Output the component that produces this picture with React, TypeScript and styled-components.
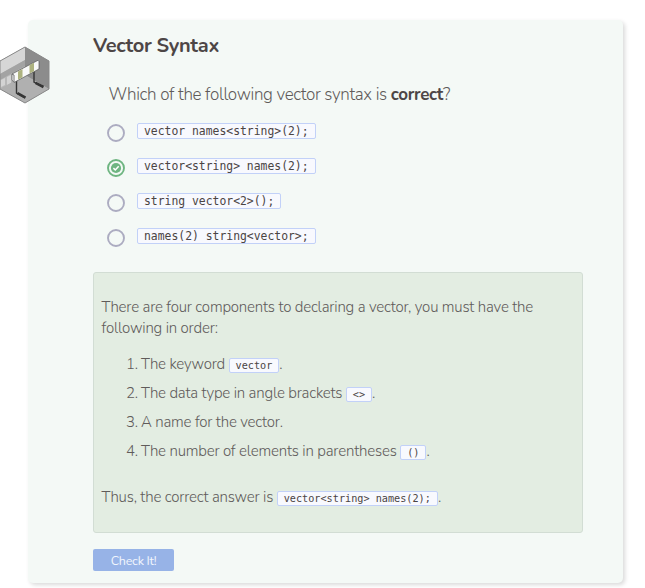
import React from "react";
import styled, { createGlobalStyle } from "styled-components";

const Global = createGlobalStyle`
  * { box-sizing: border-box; }
  html, body { margin: 0; background: #fff; overflow: hidden; }
  body { font-family: Nunito, Lato, "Open Sans", sans-serif; color: #605b5a; }
`;

const Page = styled.main`
  position: relative;
  width: 645px;
  height: 588px;
  padding: 20px 22px 5px 28px;
`;

const Card = styled.section`
  height: 563px;
  padding: 13px 40px 0 65px;
  background: #f4f9f6;
  border-radius: 5px;
  box-shadow: 2px 2px 4px rgba(0, 0, 0, 0.15);
`;

const Badge = styled.svg`
  position: absolute;
  left: 0;
  top: 46px;
  width: 50px;
  height: 58px;
`;

const Title = styled.h2`
  margin: 0;
  height: 26px;
  line-height: 26px;
  font-size: 20px;
  font-weight: 700;
  letter-spacing: -0.3px;
  color: #4d4646;
`;

const Question = styled.p`
  margin: 22px 0 0 15.5px;
  height: 26px;
  line-height: 27px;
  font-size: 17px;
  font-weight: 300;
  letter-spacing: -0.35px;
  white-space: nowrap;

  strong {
    font-weight: 700;
    color: #4d4646;
  }
`;

const Options = styled.div`
  display: grid;
  grid-auto-rows: 35px;
  margin: 8px 0 0 14px;
  height: 140px;
`;

const Option = styled.label`
  display: grid;
  grid-template-columns: 18px max-content;
  column-gap: 12px;
  align-items: start;
  padding-top: 8px;
`;

const Radio = styled.svg`
  width: 18px;
  height: 18px;
  margin-top: 1px;
`;

const Code = styled.code<{ $small?: boolean }>`
  display: inline-block;
  height: ${(p) => (p.$small ? 15 : 16)}px;
  line-height: ${(p) => (p.$small ? 13 : 15)}px;
  padding: 0 6px;
  border: 1px solid #c2d1f8;
  border-radius: 2px;
  background: #f8f9fe;
  color: #4a4444;
  font-family: Consolas, "DejaVu Sans Mono", monospace;
  font-size: ${(p) => (p.$small ? 10.2 : 11.4)}px;
  font-weight: 400;
  letter-spacing: 0;
  white-space: pre;
`;

const Feedback = styled.div`
  width: 490px;
  height: 261px;
  margin-top: 17px;
  padding: 24px 7.5px 0;
  border: 1px solid #d2ddd4;
  border-radius: 3px;
  background: #e3ede2;
  font-size: 15px;
  font-weight: 300;
  letter-spacing: -0.19px;
  white-space: nowrap;
`;

const Intro = styled.p`
  margin: 0;
  line-height: 21px;
`;

const Steps = styled.ol`
  list-style: none;
  margin: 10px 0 0;
  padding: 0 0 0 24.5px;
`;

const Line = styled.div`
  display: flex;
  align-items: center;
  height: 29px;

  code {
    position: relative;
    top: 1.5px;
    margin-left: 3.5px;
  }
`;

const Num = styled.span`
  width: 15px;
`;

const Conclusion = styled(Line)`
  margin-top: 17px;
`;

const Button = styled.button`
  display: block;
  width: 81px;
  height: 22px;
  margin-top: 16px;
  padding: 1px 0 0;
  border: 0;
  border-radius: 2px;
  background: #97b3e7;
  color: #f2f6fd;
  font: 400 12.5px/20px Nunito, Lato, sans-serif;
  letter-spacing: -0.25px;
`;

const options = [
  { code: "vector names<string>(2);" },
  { code: "vector<string> names(2);", correct: true },
  { code: "string vector<2>();" },
  { code: "names(2) string<vector>;" },
];

const steps = [
  { text: "The keyword", code: "vector" },
  { text: "The data type in angle brackets", code: "<>" },
  { text: "A name for the vector" },
  { text: "The number of elements in parentheses", code: "()" },
];

function RadioMark({ correct }: { correct?: boolean }) {
  return (
    <Radio viewBox="0 0 18 18" fill="none">
      <circle cx="9" cy="9" r="8" stroke={correct ? "#6eb581" : "#acacc1"} strokeWidth="1.9" />
      {correct && (
        <>
          <circle cx="9" cy="9" r="5.1" fill="#6eb581" />
          <path d="M6.4 9.1 8.3 11 11.7 7.3" stroke="#fff" strokeWidth="1.5" />
        </>
      )}
    </Radio>
  );
}

function BarrierBadge() {
  return (
    <Badge viewBox="0 0 50 58">
      <path d="M25 1 49 15V43L25 57 0 43V15Z" fill="#b2b2b2" />
      <path d="M25 1V29L0 43V15Z" fill="#b8b8b8" />
      <path d="M25 1V14L0 28V15Z" fill="#d6d6d6" />
      <path d="M0 28 25 14V20L0 34Z" fill="#a3a3a3" />
      <path d="M1 34 5 32V39L1 41ZM7 31 11 29V37L7 39Z" fill="#d3d3d3" />
      <path d="M25 1 49 15V43L25 29Z" fill="#8c8c8c" />
      <path d="M25 29 49 43 25 57 0 43Z" fill="#b0b0b0" />
      <path d="M25 1 49 15V43L25 57 0 43V15Z" fill="none" stroke="#898989" />
      <path d="M16.5 32V47L25 52M34 22V36L43 41" fill="none" stroke="#353535" strokeWidth="1.4" />
      <path d="M17.5 47.2 25.5 51.6M35.5 36.8 43.5 41" stroke="#353535" strokeWidth="2.6" />
      <path d="M12 28 38 14.3 39 15.5V23L14 36.5 12 34Z" fill="#f9f9f9" stroke="#555" strokeWidth=".7" />
      <path d="M18 25.5 22.5 23V31.3L18 33.8ZM29.5 19 34 16.8V25.2L29.5 27.6Z" fill="#adb27f" />
      <path d="M12 28 14 29V36" fill="none" stroke="#555" strokeWidth=".8" />
    </Badge>
  );
}

export default function App() {
  return (
    <Page>
      <Global />
      <Card>
        <Title>Vector Syntax</Title>
        <Question>
          Which of the following vector syntax is <strong>correct</strong>?
        </Question>
        <Options>
          {options.map((o) => (
            <Option key={o.code}>
              <RadioMark correct={o.correct} />
              <Code>{o.code}</Code>
            </Option>
          ))}
        </Options>
        <Feedback>
          <Intro>
            There are four components to declaring a vector, you must have the
            <br />
            following in order:
          </Intro>
          <Steps>
            {steps.map((s, i) => (
              <li key={s.text}>
                <Line>
                  <Num>{i + 1}.</Num>
                  <span>{s.text}</span>
                  {s.code && <Code $small>{s.code}</Code>}
                  <span>.</span>
                </Line>
              </li>
            ))}
          </Steps>
          <Conclusion>
            <span>Thus, the correct answer is</span>
            <Code $small>vector&lt;string&gt; names(2);</Code>
            <span>.</span>
          </Conclusion>
        </Feedback>
        <Button type="button">Check It!</Button>
      </Card>
      <BarrierBadge />
    </Page>
  );
}
